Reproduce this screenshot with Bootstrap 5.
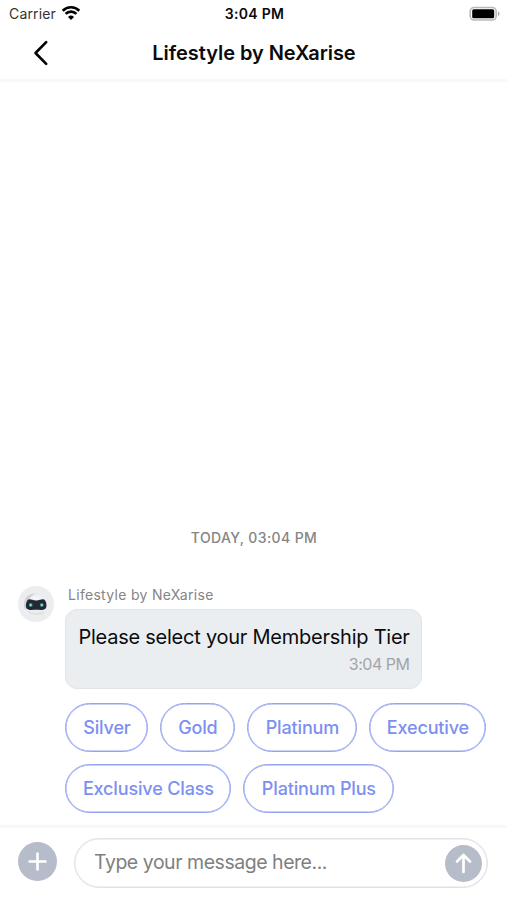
<!DOCTYPE html>
<html lang="en">
<head>
<meta charset="utf-8">
<meta name="viewport" content="width=device-width, initial-scale=1">
<title>Lifestyle by NeXarise</title>
<link href="https://cdn.jsdelivr.net/npm/bootstrap@5.3.0/dist/css/bootstrap.min.css" rel="stylesheet">
<style>
  body { font-family: Inter, "Liberation Sans", sans-serif; color: #0b0b0d; background: #fff; overflow: hidden; }
  .side { flex: 1 1 0; }
  .status-bar { height: 27px; padding: 0 7px 0 9px; line-height: 27px; font-size: 14px; }
  .carrier { color: #333; letter-spacing: .15px; }
  .carrier svg { margin-left: 5px; margin-bottom: 2px; }
  .clock { font-weight: 600; letter-spacing: .3px; }
  .title-bar { height: 55px; border-bottom: 3px solid #f8f8f8; padding: 0 31px 1px 32px; }
  .title-bar h1 { font-size: 20px; line-height: 24px; font-weight: 600; letter-spacing: -.05px; }
  .day { font-size: 14px; line-height: 18px; font-weight: 500; color: #858585; letter-spacing: .38px; margin-bottom: 39px; padding-left: 1px; }
  .thread { padding-left: 18px; }
  .robot { width: 36px; height: 36px; margin-right: 11.4px; }
  .sender { font-size: 14px; line-height: 18px; color: #858585; margin-left: 2.6px; letter-spacing: .3px; }
  .bubble { width: 357px; height: 80px; margin-top: 5px; padding: 14px 12px 0; border: 1px solid #e1e5e8; border-radius: 12px; background: #eaeef1; }
  .bubble-text { font-size: 20px; line-height: 26px; letter-spacing: -.24px; white-space: nowrap; }
  .bubble-time { font-size: 16px; line-height: 20px; margin-top: 4px; color: #a2a5a8; letter-spacing: -.5px; }
  .choices { gap: 12px; margin-top: 14px; padding-bottom: 12px; }
  .choice { height: 49px; padding: 0; border: 1px solid #92a3f2; border-radius: 25px; box-shadow: inset 0 0 0 .5px #92a3f2; color: #7b90f2; font-size: 18px; font-weight: 500; letter-spacing: -.15px; white-space: nowrap; }
  .w-silver { width: 83px; } .w-gold { width: 75px; } .w-platinum { width: 110px; }
  .w-executive { width: 117px; } .w-class { width: 166px; } .w-plus { width: 151px; }
  .composer { height: 75px; border-top: 3px solid #f8f8f8; padding: 10px 19px 0 18px; }
  .add-btn { width: 39px; height: 39px; margin: 3.5px 17px 0 0; }
  .message-box { height: 50px; border: 1px solid #e2e2e4; border-radius: 25px; box-shadow: inset 0 0 0 .5px #e2e2e4; padding: 0 5px 0 19px; }
  .message-box input { font-size: 19.5px; letter-spacing: -.47px; color: #333; min-width: 0; outline: 0; }
  .message-box input::placeholder { color: #808080; opacity: 1; }
</style>
</head>
<body>
<div class="vh-100 d-flex flex-column">
  <header>
    <div class="status-bar d-flex">
      <div class="side d-flex align-items-center carrier">Carrier
        <svg width="20" height="16" viewBox="0 0 20 16" fill="none" stroke="#000" stroke-width="2.700"><path d="M1.700 5.700a11.700 11.700 0 0 1 16.600 0M4.600 8.900a7.700 7.700 0 0 1 10.800 0"/><path d="M10 15l-3-3a4.400 4.400 0 0 1 6 0z" fill="#000" stroke="none"/></svg>
      </div>
      <div class="clock">3:04 PM</div>
      <div class="side d-flex align-items-center justify-content-end">
        <svg width="31" height="16" viewBox="0 0 31 16"><rect x="1.200" y="1.500" width="26" height="12.500" rx="4" fill="#fff" stroke="#b9b9b9" stroke-width="1.600"/><rect x="3.200" y="3.300" width="22" height="9" rx="1.500" fill="#000"/><path d="M29 5.600c2 .7 2 3.700 0 4.400z" fill="#aaa"/></svg>
      </div>
    </div>
    <div class="title-bar d-flex align-items-center">
      <div class="side"><svg class="d-block" width="17" height="26" viewBox="0 0 17 26" fill="none" stroke="#000" stroke-width="2.600" stroke-linecap="round" stroke-linejoin="round"><path d="M14.200 2.200L3.500 13l10.700 10.800"/></svg></div>
      <h1 class="m-0">Lifestyle by NeXarise</h1>
      <div class="side"></div>
    </div>
  </header>

  <main class="flex-grow-1 d-flex flex-column justify-content-end">
    <div class="day text-center">TODAY, 03:04 PM</div>
    <div class="thread d-flex align-items-start">
      <svg class="robot flex-shrink-0" viewBox="0 0 36 36">
        <circle cx="18" cy="18" r="18" fill="#ebedef"/>
        <path d="M6 19C6 11 11 7 18.500 7.500c-5 1-8 5-8.500 9L8 24c-1.500-1-2-3-2-5z" fill="#cfd2d4"/>
        <path d="M11 15c2-5 7-7 13-4l4 5z" fill="#f3f4f5"/>
        <path d="M10 25.500c4 3 12 3.500 16 1" fill="none" stroke="#dcdee0" stroke-width="1.500"/>
        <path d="M10 13.700c2.500-1.200 4 .8 8.200.8s5.500-2 8.200-.8c2 1.200 3 7.300 1 9.100-2.500 1.800-6 1-9.300 1s-7 .8-9.200-1c-1.800-1.800-.8-7.900 1.100-9.100z" fill="#202936"/>
        <circle cx="12.700" cy="19" r="2" fill="#3f7774"/><circle cx="23.800" cy="19" r="2" fill="#3f7774"/>
        <circle cx="12.700" cy="19" r="1.200" fill="#8fd6c6"/><circle cx="23.800" cy="19" r="1.200" fill="#8fd6c6"/>
      </svg>
      <div>
        <div class="sender">Lifestyle by NeXarise</div>
        <div class="bubble">
          <div class="bubble-text">Please select your Membership Tier</div>
          <div class="bubble-time text-end">3:04 PM</div>
        </div>
        <div class="choices d-flex flex-wrap">
          <button class="btn choice w-silver">Silver</button>
          <button class="btn choice w-gold">Gold</button>
          <button class="btn choice w-platinum">Platinum</button>
          <button class="btn choice w-executive">Executive</button>
          <button class="btn choice w-class">Exclusive Class</button>
          <button class="btn choice w-plus">Platinum Plus</button>
        </div>
      </div>
    </div>
  </main>

  <footer class="composer d-flex align-items-start">
    <button class="btn p-0 border-0 add-btn flex-shrink-0" aria-label="Add">
      <svg class="d-block" width="39" height="39" viewBox="0 0 39 39"><circle cx="19.500" cy="19.500" r="19.500" fill="#b7bccb"/><path d="M19.500 11.500v16M11.500 19.500h16" stroke="#fff" stroke-width="2.600" stroke-linecap="round"/></svg>
    </button>
    <div class="message-box flex-grow-1 d-flex align-items-center">
      <input class="border-0 bg-transparent p-0 flex-grow-1" type="text" placeholder="Type your message here...">
      <button class="btn p-0 border-0 flex-shrink-0" aria-label="Send">
        <svg class="d-block" width="37" height="37" viewBox="0 0 37 37"><circle cx="18.500" cy="18.500" r="18.500" fill="#b7bccb"/><path d="M18.500 27V10.500M12 16.500l6.500-6.500 6.500 6.500" fill="none" stroke="#fff" stroke-width="2.700" stroke-linecap="round" stroke-linejoin="round"/></svg>
      </button>
    </div>
  </footer>
</div>
<script src="https://cdn.jsdelivr.net/npm/bootstrap@5.3.0/dist/js/bootstrap.bundle.min.js"></script>
</body>
</html>
